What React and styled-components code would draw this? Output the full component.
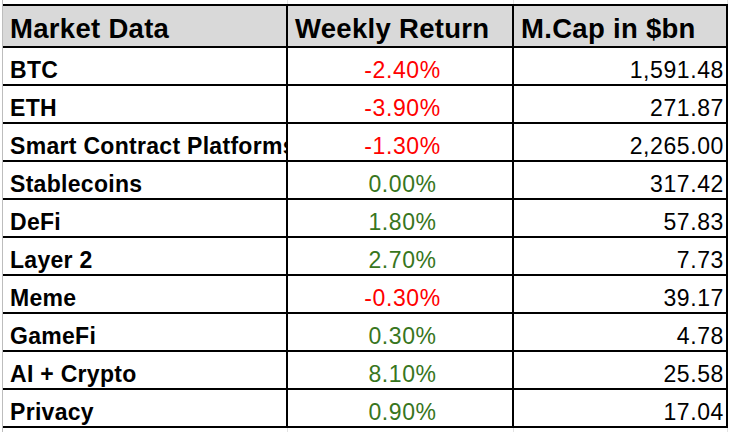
import React from "react";
import styled, { createGlobalStyle } from "styled-components";

const GlobalStyle = createGlobalStyle`
  html, body { margin: 0; padding: 0; background: #ffffff; }
  body { font-family: "Liberation Sans", Arial, Helvetica, sans-serif; }
`;

const COLS = "285px 226px 214px";

const Sheet = styled.div`
  margin-left: 2px;
  border-left: 1px solid #bdbdbd;
  height: 432px;
  width: 725px;
  display: flex;
  flex-direction: column;
`;

const Gutter = styled.div`
  display: grid;
  grid-template-columns: ${COLS};
  height: ${(p) => p.$h}px;
`;

const GutterCell = styled.div`
  border-right: 1px solid #e3e3e3;
`;

const Table = styled.div`
  display: grid;
  grid-template-columns: ${COLS};
  border-top: 2px solid #000;
`;

const Cell = styled.div`
  box-sizing: border-box;
  height: ${(p) => (p.$header ? 42 : 38)}px;
  border-right: 2px solid #000;
  border-bottom: 2px solid #000;
  background: ${(p) => (p.$header ? "#d9d9d9" : "#ffffff")};
  display: flex;
  align-items: flex-end;
  justify-content: ${(p) =>
    p.$align === "right" ? "flex-end" : p.$align === "center" ? "center" : "flex-start"};
  padding: ${(p) => (p.$header ? "0 4px 4px 7px" : "0 2px 2px 7px")};
  overflow: hidden;
  white-space: nowrap;
  color: ${(p) => p.$color || "#000"};
  font-size: ${(p) => (p.$header ? "27.5px" : "23px")};
  font-weight: ${(p) => (p.$bold ? 700 : 400)};
  letter-spacing: ${(p) => (p.$header ? "0.3px" : p.$bold ? "0.3px" : "0.6px")};
  line-height: 1;
`;

const RED = "#ff0000";
const GREEN = "#38761d";

const rows = [
  ["BTC", "-2.40%", "1,591.48"],
  ["ETH", "-3.90%", "271.87"],
  ["Smart Contract Platforms", "-1.30%", "2,265.00"],
  ["Stablecoins", "0.00%", "317.42"],
  ["DeFi", "1.80%", "57.83"],
  ["Layer 2", "2.70%", "7.73"],
  ["Meme", "-0.30%", "39.17"],
  ["GameFi", "0.30%", "4.78"],
  ["AI + Crypto", "8.10%", "25.58"],
  ["Privacy", "0.90%", "17.04"],
];

export default function App() {
  return (
    <>
      <GlobalStyle />
      <Sheet>
        <Gutter $h={4}>
          <GutterCell />
          <GutterCell />
          <GutterCell />
        </Gutter>
        <Table>
          <Cell $header $bold>Market Data</Cell>
          <Cell $header $bold>Weekly Return</Cell>
          <Cell $header $bold>M.Cap in $bn</Cell>
          {rows.map(([name, ret, cap]) => (
            <React.Fragment key={name}>
              <Cell $bold>{name}</Cell>
              <Cell $align="center" $color={ret.startsWith("-") ? RED : GREEN}>
                {ret}
              </Cell>
              <Cell $align="right">{cap}</Cell>
            </React.Fragment>
          ))}
        </Table>
        <Gutter $h={4}>
          <GutterCell />
          <GutterCell />
          <GutterCell />
        </Gutter>
      </Sheet>
    </>
  );
}
